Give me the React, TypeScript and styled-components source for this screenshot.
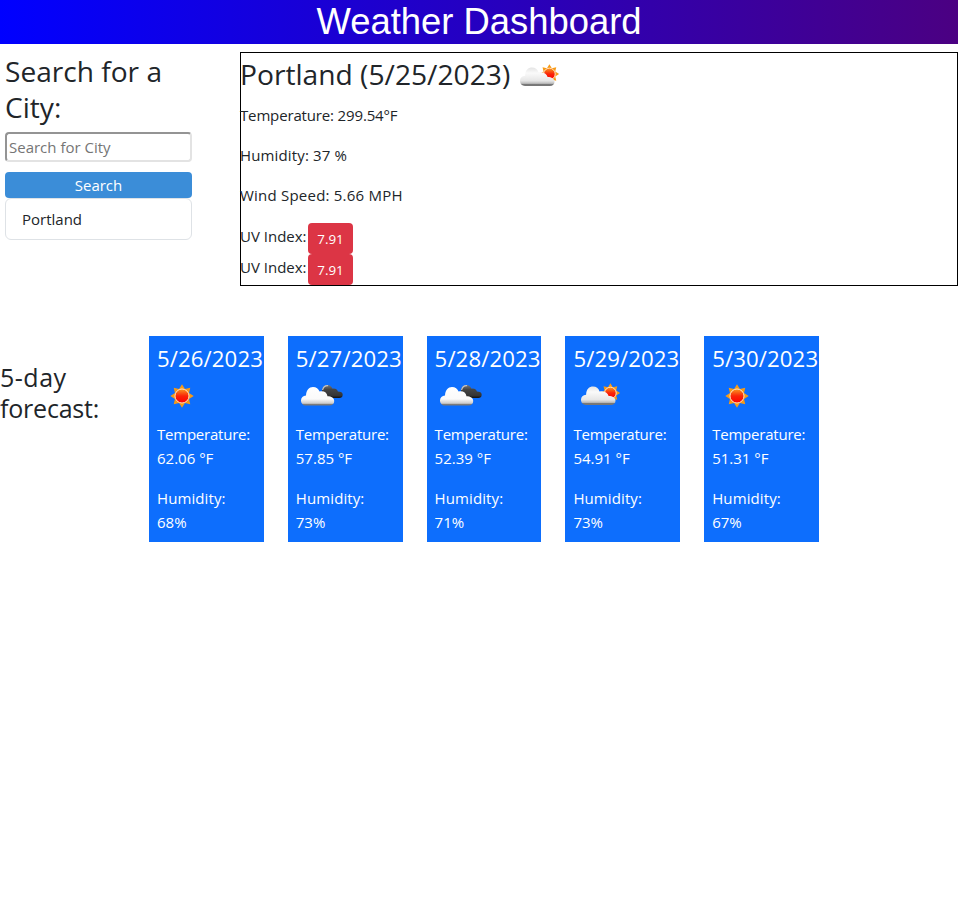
import React from "react";
import styled, { createGlobalStyle } from "styled-components";

const GlobalStyle = createGlobalStyle`
  *, *::before, *::after { box-sizing: border-box; }
  body {
    margin: 0;
    background: #fff;
    color: #212529;
    font-family: "Open Sans", "Noto Sans", sans-serif;
    font-size: 15px;
    line-height: 24px;
  }
  h1, h2, h3, h4, p, ul { margin: 0; padding: 0; font-weight: 400; }
`;

const Page = styled.div`
  width: 958px;
`;

const Header = styled.header`
  height: 44px;
  background: linear-gradient(90deg, #0000ff, #4b0082);
  text-align: center;
`;

const Title = styled.h1`
  color: #fff;
  font: 400 36.4px/44px "Liberation Sans", Arial, sans-serif;
`;

const Main = styled.main`
  display: flex;
  align-items: flex-start;
  justify-content: space-between;
  padding-top: 8px;
`;

const Sidebar = styled.aside`
  display: flex;
  flex-direction: column;
  width: 192px;
  padding: 1px 0 0 5px;
`;

const SearchHeading = styled.h2`
  font-size: 28.1px;
  line-height: 36px;
  white-space: nowrap;
  margin-bottom: 7px;
`;

const SearchInput = styled.input`
  width: 100%;
  height: 30px;
  padding: 1px 2px;
  border: 2px solid;
  border-color: #949494 #e3e3e3 #e3e3e3 #949494;
  border-radius: 4px;
  background: #fff;
  font: inherit;
  &::placeholder { color: #757575; opacity: 1; }
`;

const SearchButton = styled.button`
  height: 26px;
  margin-top: 10px;
  padding: 0;
  border: 0;
  border-radius: 4px;
  background: #3b8dd8;
  color: #fff;
  font: inherit;
`;

const History = styled.ul`
  list-style: none;
  border: 1px solid #dee2e6;
  border-radius: 6px;
`;

const HistoryItem = styled.li`
  padding: 8px 16px;
`;

const Current = styled.section`
  width: 718px;
  height: 234px;
  border: 1px solid #000;
`;

const CurrentHeading = styled.h2`
  display: flex;
  align-items: center;
  gap: 2px;
  height: 43px;
  margin: 0 0 7px -1px;
  font-size: 28.2px;
  line-height: 43px;
  white-space: nowrap;

  svg { margin-top: 4px; }
`;

const Reading = styled.p<{ $tracking?: number }>`
  margin: 0 0 16px -1px;
  letter-spacing: ${({ $tracking = 0 }) => $tracking}px;
`;

const UvRow = styled.div`
  display: flex;
  height: 31px;
  margin-left: -1px;
  line-height: 27px;
`;

const UvLabel = styled.span`
  width: 68px;
`;

const UvBadge = styled.span`
  width: 45px;
  height: 31px;
  border-radius: 4px;
  background: #dc3545;
  color: #fff;
  font-size: 13.4px;
  line-height: 32px;
  text-align: center;
`;

const Forecast = styled.section`
  display: grid;
  grid-template-columns: 125px repeat(5, 114.8px);
  column-gap: 24px;
  margin-top: 50px;
`;

const ForecastHeading = styled.h3`
  padding-top: 26px;
  font-size: 25px;
  line-height: 31px;
  letter-spacing: -0.2px;

  span { letter-spacing: 0.5px; }
`;

const Card = styled.article`
  height: 206px;
  padding: 9px 0 0 8px;
  background: #0d6efd;
  color: #fff;
  white-space: nowrap;

  svg { margin: -2px 0 1px; }
`;

const CardDate = styled.h4`
  font-size: 22.2px;
  line-height: 28px;
  letter-spacing: 0.1px;
`;

const CardReading = styled.p`
  margin-bottom: 16px;
`;

const CardLabel = styled.span<{ $tracking: number }>`
  display: block;
  letter-spacing: ${({ $tracking }) => $tracking}px;
`;

const IconSvg = styled.svg`
  display: block;
  flex: none;
  width: 50px;
  height: 50px;
`;

type Condition = "sun" | "few" | "broken";

function Sun({ cx, cy, r }: { cx: number; cy: number; r: number }) {
  const rays = Array.from({ length: 16 }, (_, i) => {
    const angle = (i * Math.PI) / 8 - Math.PI / 2;
    const radius = i % 2 ? r * 0.65 : r;
    return `${cx + Math.cos(angle) * radius},${cy + Math.sin(angle) * radius}`;
  });
  return (
    <g>
      <polygon points={rays.join(" ")} fill="#f79a16" />
      <circle cx={cx} cy={cy} r={r * 0.6} fill="url(#disc)" stroke="#ffe2c4" strokeWidth="1" />
    </g>
  );
}

function WeatherIcon({ kind }: { kind: Condition }) {
  return (
    <IconSvg viewBox="0 0 50 50" aria-hidden="true">
      <defs>
        <linearGradient id="disc" x1="0" y1="0" x2="0" y2="1">
          <stop offset="0" stopColor="#f89a20" />
          <stop offset=".5" stopColor="#fa2408" />
          <stop offset="1" stopColor="#ff0000" />
        </linearGradient>
        <linearGradient id="cloud" x1="0" y1="0" x2="0" y2="1">
          <stop offset="0" stopColor="#e4e4e4" />
          <stop offset=".3" stopColor="#fafafa" />
          <stop offset=".72" stopColor="#e6e6e6" />
          <stop offset=".86" stopColor="#bdbdbd" />
          <stop offset=".92" stopColor="#777" />
          <stop offset="1" stopColor="#777" />
        </linearGradient>
        <linearGradient id="whiteCloud" x1="0" y1="0" x2="0" y2="1">
          <stop offset="0" stopColor="#fff" />
          <stop offset=".65" stopColor="#fafafa" />
          <stop offset=".88" stopColor="#ccc" />
          <stop offset=".95" stopColor="#777" />
        </linearGradient>
        <linearGradient id="darkCloud" x1="0" y1="0" x2="0" y2="1">
          <stop offset="0" stopColor="#777" />
          <stop offset=".35" stopColor="#444" />
          <stop offset=".8" stopColor="#353535" />
          <stop offset="1" stopColor="#111" />
        </linearGradient>
      </defs>
      {kind === "sun" && <Sun cx={25} cy={25} r={11.7} />}
      {kind === "few" && (
        <>
          <Sun cx={37.4} cy={22} r={9.7} />
          <path
            d="M13 34C10 34 8 31.7 8 28.8c0-3 2-4.8 5.1-5C13.3 18 16.3 15.5 20 15.5c3.3 0 5.5 1.8 6.6 5 4.8-1.2 8.2 1.2 9 4.6 4 .1 6.9 1.6 6.9 4.7 0 2.7-1.8 4.2-4.5 4.2Z"
            fill="url(#cloud)"
          />
        </>
      )}
      {kind === "broken" && (
        <>
          <path
            d="M29.5 27C27 27 26 25 26 21c0-4 1.8-6.9 5.2-6.9 2.6 0 4.3 1.4 5.1 3.5 3-.8 5.3.7 5.6 3 3 0 4.8.9 4.8 3.2 0 2.1-1.4 3.2-3.5 3.2Z"
            fill="url(#darkCloud)"
          />
          <path
            d="M26.6 19c.6-3.2 2.5-4.6 5.5-4.4"
            fill="none"
            stroke="#c5c5c5"
            strokeWidth="1.2"
          />
          <path
            d="M10 34.5C7 34.5 5 32.4 5 29.5c0-2.9 2-4.8 5-5 .1-5.4 3.2-8.6 7-8.6 3.3 0 5.5 1.7 6.6 4.7 4.3-1 7.5 1.2 7.9 4.6 4 .1 6.7 1.7 6.7 4.8 0 2.8-1.8 4.5-4.7 4.5Z"
            fill="url(#whiteCloud)"
          />
        </>
      )}
    </IconSvg>
  );
}

const days: { date: string; kind: Condition; temp: string; humidity: string }[] = [
  { date: "5/26/2023", kind: "sun", temp: "62.06", humidity: "68" },
  { date: "5/27/2023", kind: "broken", temp: "57.85", humidity: "73" },
  { date: "5/28/2023", kind: "broken", temp: "52.39", humidity: "71" },
  { date: "5/29/2023", kind: "few", temp: "54.91", humidity: "73" },
  { date: "5/30/2023", kind: "sun", temp: "51.31", humidity: "67" },
];

export default function App() {
  return (
    <Page>
      <GlobalStyle />
      <Header>
        <Title>Weather Dashboard</Title>
      </Header>
      <Main>
        <Sidebar>
          <SearchHeading>
            Search for a<br />City:
          </SearchHeading>
          <SearchInput placeholder="Search for City" />
          <SearchButton>Search</SearchButton>
          <History>
            <HistoryItem>Portland</HistoryItem>
          </History>
        </Sidebar>
        <Current>
          <CurrentHeading>
            Portland (5/25/2023)
            <WeatherIcon kind="few" />
          </CurrentHeading>
          <Reading $tracking={-0.15}>Temperature: 299.54°F</Reading>
          <Reading $tracking={0.15}>Humidity: 37 %</Reading>
          <Reading $tracking={0.22}>Wind Speed: 5.66 MPH</Reading>
          <UvRow><UvLabel>UV Index:</UvLabel><UvBadge>7.91</UvBadge></UvRow>
          <UvRow><UvLabel>UV Index:</UvLabel><UvBadge>7.91</UvBadge></UvRow>
        </Current>
      </Main>
      <Forecast>
        <ForecastHeading>
          <span>5-day</span><br />forecast:
        </ForecastHeading>
        {days.map((day) => (
          <Card key={day.date}>
            <CardDate>{day.date}</CardDate>
            <WeatherIcon kind={day.kind} />
            <CardReading>
              <CardLabel $tracking={-0.22}>Temperature:</CardLabel>
              {day.temp} °F
            </CardReading>
            <CardReading>
              <CardLabel $tracking={0.1}>Humidity:</CardLabel>
              {day.humidity}%
            </CardReading>
          </Card>
        ))}
      </Forecast>
    </Page>
  );
}
